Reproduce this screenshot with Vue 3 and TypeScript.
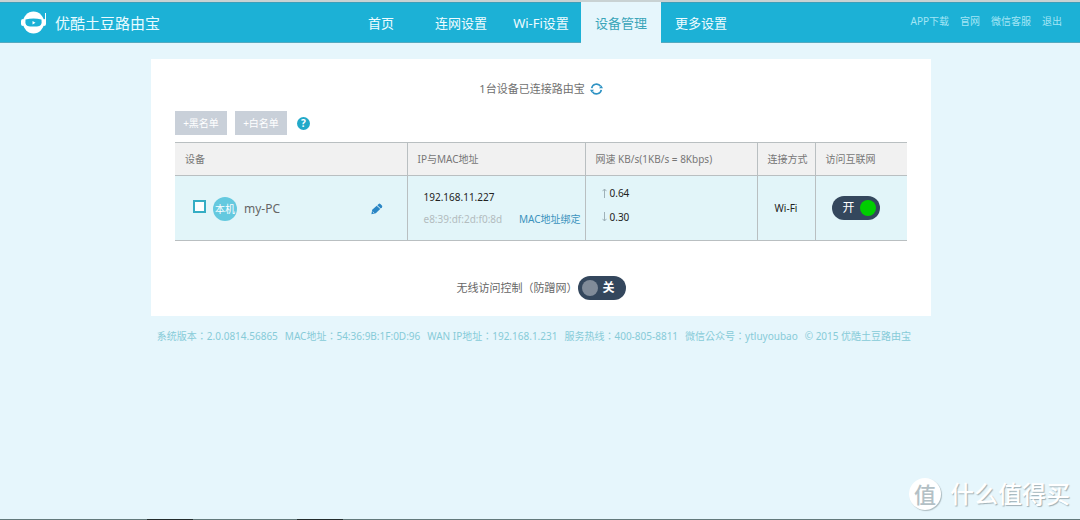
<script setup lang="ts">
import { ref } from 'vue'

interface Device {
  name: string
  ip: string
  mac: string
  up: string
  down: string
  link: string
  online: boolean
  checked: boolean
}

const tabs = ['首页', '连网设置', 'Wi-Fi设置', '设备管理', '更多设置']
const activeTab = ref('设备管理')
const links = ['APP下载', '官网', '微信客服', '退出']
const devices = ref<Device[]>([
  {
    name: 'my-PC',
    ip: '192.168.11.227',
    mac: 'e8:39:df:2d:f0:8d',
    up: '0.64',
    down: '0.30',
    link: 'Wi-Fi',
    online: true,
    checked: false,
  },
])
const accessControl = ref(false)
const info = [
  '系统版本：2.0.0814.56865',
  'MAC地址：54:36:9B:1F:0D:96',
  'WAN IP地址：192.168.1.231',
  '服务热线：400-805-8811',
  '微信公众号：ytluyoubao',
  '© 2015 优酷土豆路由宝',
]
</script>

<template>
  <div class="page">
    <header class="topbar">
      <div class="brand">
        <svg class="logo" viewBox="0 0 26 24" aria-hidden="true">
          <path d="M24.500 2v9" stroke="#fff" stroke-width="1" fill="none" />
          <rect x="0" y="8" width="4" height="7" rx="2" fill="#fff" />
          <rect x="21" y="8" width="4" height="7" rx="2" fill="#fff" />
          <ellipse cx="12.500" cy="11.500" rx="10.500" ry="11" fill="#fff" />
          <path d="M4.500 8.500Q12.500 6.500 20.500 8.500Q21.500 15.500 16 15.500H9Q3.500 15.500 4.500 8.500Z" fill="#1cb1d6" />
          <path d="M11.500 10l3 1.800-3 1.800z" fill="#fff" />
        </svg>
        <span>优酷土豆路由宝</span>
      </div>
      <nav class="tabs">
        <a
          v-for="tab in tabs"
          :key="tab"
          href="#"
          :class="{ active: tab === activeTab }"
          @click.prevent="activeTab = tab"
        >{{ tab }}</a>
      </nav>
      <div class="links">
        <a v-for="link in links" :key="link" href="#">{{ link }}</a>
      </div>
    </header>

    <div class="content">
      <main class="card">
        <div class="summary">
          <span>{{ devices.length }}台设备已连接路由宝</span>
          <button class="icon-btn" type="button" aria-label="刷新">
            <svg width="13" height="12" viewBox="0 0 13 12">
              <path d="M1.700 5.200A4.900 4.900 0 0 1 10.600 3.300M11.300 6.800A4.900 4.900 0 0 1 2.400 8.700" fill="none" stroke="#2f93c4" stroke-width="1.600" />
              <path d="M9 5.200h4L11.400 2.400zM4 6.800H0L1.600 9.600z" fill="#2f93c4" />
            </svg>
          </button>
        </div>

        <div class="actions">
          <button class="list-btn" type="button">+黑名单</button>
          <button class="list-btn" type="button">+白名单</button>
          <button class="help" type="button" aria-label="帮助">?</button>
        </div>

        <table class="devices">
          <colgroup>
            <col class="c-device" />
            <col class="c-address" />
            <col class="c-speed" />
            <col class="c-link" />
            <col class="c-net" />
          </colgroup>
          <thead>
            <tr>
              <th>设备</th>
              <th>IP与MAC地址</th>
              <th>网速 KB/s(1KB/s = 8Kbps)</th>
              <th>连接方式</th>
              <th>访问互联网</th>
            </tr>
          </thead>
          <tbody>
            <tr v-for="d in devices" :key="d.mac">
              <td>
                <div class="device">
                  <input v-model="d.checked" type="checkbox" :aria-label="d.name" />
                  <span class="avatar">本机</span>
                  <span class="name">{{ d.name }}</span>
                  <button class="icon-btn edit" type="button" aria-label="编辑">
                    <svg width="12" height="12" viewBox="0 0 12 12">
                      <path d="M.4 11.200l.8-4.400L5.700 2.700l3.500 3.400L4.800 10.300z" fill="#2a86c5" />
                      <path d="M6.300 2.200L7.700.9Q8.600.3 9.400 1l1.500 1.500q.8.900.1 1.700L9.800 5.500z" fill="#2a86c5" />
                      <path d="M1.700 8.700l1.400 1.300" stroke="#e2f5f9" stroke-width=".7" />
                    </svg>
                  </button>
                </div>
              </td>
              <td>
                <div class="address">
                  <span>{{ d.ip }}</span>
                  <div class="mac">
                    <span>{{ d.mac }}</span>
                    <a href="#">MAC地址绑定</a>
                  </div>
                </div>
              </td>
              <td>
                <div class="speed">
                  <span v-for="(v, i) in [d.up, d.down]" :key="i">
                    <svg width="5" height="10" viewBox="0 0 5 10" :class="{ down: i === 1 }" aria-hidden="true">
                      <path d="M2.500 10V1M.5 3.200l2-2.200 2 2.200" fill="none" stroke="#9fb1b8" />
                    </svg>
                    {{ v }}
                  </span>
                </div>
              </td>
              <td class="link">{{ d.link }}</td>
              <td>
                <button
                  class="switch"
                  :class="{ on: d.online }"
                  type="button"
                  role="switch"
                  :aria-checked="d.online"
                  aria-label="访问互联网"
                  @click="d.online = !d.online"
                >
                  <span>{{ d.online ? '开' : '关' }}</span><i></i>
                </button>
              </td>
            </tr>
          </tbody>
        </table>

        <div class="control">
          <label for="access-control">无线访问控制（防蹭网）</label>
          <button
            id="access-control"
            class="switch"
            :class="{ on: accessControl }"
            type="button"
            role="switch"
            :aria-checked="accessControl"
            @click="accessControl = !accessControl"
          >
            <span>{{ accessControl ? '开' : '关' }}</span><i></i>
          </button>
        </div>
      </main>

      <footer class="info">
        <span v-for="item in info" :key="item">{{ item }}</span>
      </footer>
    </div>

    <div class="watermark">
      <span class="seal">值</span>
      <span>什么值得买</span>
    </div>
    <div class="taskbar"><i></i><i></i></div>
  </div>
</template>

<style>
body {
  margin: 0;
  background: #e6f6fc;
}
</style>

<style scoped>
.page {
  position: relative;
  display: flex;
  flex-direction: column;
  box-sizing: border-box;
  min-height: 100vh;
  border-top: 2px solid #c9d2d3;
  background: #e6f6fc;
  color: #666;
  font: 10px/14px "Noto Sans", "Noto Sans CJK SC", sans-serif;
}
a {
  color: inherit;
  text-decoration: none;
}
button {
  padding: 0;
  border: 0;
  background: none;
  color: inherit;
  font: inherit;
  cursor: pointer;
}
.topbar {
  display: grid;
  grid-template-columns: 1fr auto 1fr;
  height: 41px;
  box-sizing: border-box;
  padding-left: 2px;
  background: #1cb1d6;
  box-shadow: inset 0 1px #3b9fbb, inset 0 -1px #55a9bf;
}
.brand {
  display: flex;
  align-items: center;
  gap: 8px;
  padding-left: 19px;
  color: #e9fbff;
  font-size: 15px;
}
.logo {
  width: 26px;
  height: 24px;
}
.tabs {
  display: flex;
}
.tabs a {
  width: 80px;
  color: #f0fcff;
  font-size: 13px;
  line-height: 42px;
  text-align: center;
  white-space: nowrap;
}
.tabs .active {
  background: #e6f6fc;
  color: #3aa5b9;
}
.links {
  display: flex;
  justify-content: flex-end;
  gap: 11px;
  padding-right: 18px;
  color: #a3e5f5;
  line-height: 38px;
}
.content {
  padding-left: 2px;
}
.card {
  box-sizing: border-box;
  width: 780px;
  max-width: 100%;
  margin: 16px auto 0;
  padding: 20px 24px 16px;
  background: #fff;
}
.summary {
  display: flex;
  align-items: center;
  justify-content: center;
  gap: 5px;
  color: #707070;
  font-size: 11px;
  line-height: 20px;
}
.icon-btn {
  display: flex;
}
.actions {
  display: flex;
  align-items: center;
  gap: 8px;
  margin: 12px 0 7px;
}
.list-btn {
  width: 52px;
  height: 24px;
  background: #c9d0d9;
  color: #fff;
}
.help {
  width: 13px;
  height: 13px;
  margin-left: 2px;
  border-radius: 50%;
  background: #22a9c9;
  color: #fff;
  font-weight: 700;
  line-height: 13px;
}
.devices {
  width: 100%;
  border-collapse: collapse;
  table-layout: fixed;
}
.c-device { width: 232px; }
.c-address { width: 178px; }
.c-speed { width: 172px; }
.c-link { width: 58px; }
.devices tr > * {
  padding: 0;
  border: 1px solid #b9bfc1;
}
.devices tr > :first-child { border-left: 0; }
.devices tr > :last-child { border-right: 0; }
.devices th {
  height: 32px;
  padding-left: 10px;
  background: #f1f1f1;
  color: #777;
  font-weight: 400;
  text-align: left;
  white-space: nowrap;
}
.devices td {
  height: 64px;
  background: #e2f5f9;
  color: #222;
}
.device {
  display: flex;
  align-items: center;
  gap: 7px;
  padding: 2px 24px 0 18px;
}
.device input {
  appearance: none;
  box-sizing: border-box;
  width: 13px;
  height: 13px;
  margin: 0 0 5px;
  border: 2px solid #35adc4;
  background: #fff;
}
.device input:checked {
  background: #35adc4;
}
.avatar {
  width: 24px;
  border-radius: 50%;
  background: #64c9df;
  color: #fff;
  line-height: 24px;
  text-align: center;
}
.name {
  color: #666;
  font-size: 12px;
}
.edit {
  margin-left: auto;
}
.address {
  display: flex;
  flex-direction: column;
  gap: 8px;
  padding: 0 4px 0 16px;
}
.mac {
  display: flex;
  justify-content: space-between;
  color: #b3bcbe;
  white-space: nowrap;
}
.mac a {
  color: #3b93bd;
}
.speed {
  display: flex;
  flex-direction: column;
  gap: 10px;
  padding: 0 0 6px 16px;
}
.speed span {
  display: flex;
  align-items: center;
  gap: 3px;
}
.down {
  transform: rotate(180deg);
}
.devices .link {
  text-align: center;
}
.switch {
  display: flex;
  flex-direction: row-reverse;
  align-items: center;
  justify-content: space-between;
  box-sizing: border-box;
  width: 48px;
  height: 24px;
  padding: 0 11px 0 4px;
  border-radius: 12px;
  background: #34475d;
  color: #fff;
  font-size: 12px;
  font-weight: 700;
}
.switch i {
  width: 16px;
  height: 16px;
  border-radius: 50%;
  background: #808b99;
}
.switch.on {
  flex-direction: row;
  padding: 0 4px 0 11px;
  font-weight: 400;
}
.switch.on i {
  background: #00ce00;
}
td .switch {
  margin-left: 16px;
}
.control {
  display: flex;
  align-items: center;
  justify-content: center;
  margin-top: 35px;
  font-size: 11px;
}
.info {
  display: flex;
  flex-wrap: wrap;
  justify-content: center;
  gap: 0 7px;
  margin: 13px 0 32px;
  padding-right: 14px;
  color: #86cbd8;
  font-family: "Noto Sans", "Noto Sans CJK TC", "Noto Sans CJK SC", sans-serif;
}
.watermark {
  position: absolute;
  right: 10px;
  bottom: 10px;
  display: flex;
  align-items: center;
  gap: 9px;
  color: #fff;
  font-size: 24px;
  font-weight: 500;
  line-height: 32px;
  text-shadow: 1px 1px 1px #9fb0b6;
}
.seal {
  width: 32px;
  border-radius: 50%;
  background: #fff;
  box-shadow: 1px 1px 1px #adbcc1;
  color: #b3c0c5;
  font-size: 22px;
  text-align: center;
  text-shadow: none;
}
.taskbar {
  display: flex;
  gap: 104px;
  height: 1px;
  margin-top: auto;
  padding-left: 147px;
  background: #63797b;
}
.taskbar i {
  width: 46px;
  background: #222b2c;
}
</style>
